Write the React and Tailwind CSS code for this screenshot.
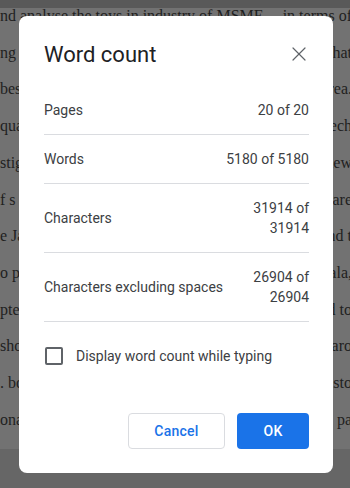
import React from 'react';
import { X } from 'lucide-react';

const lines = [
  ['nd analyse the toys in industry of MSME', 'in terms of'],
  ['ng the firms and explore', 'what'],
  ['best practices in the sector and', 'area.'],
  ['quality of the products and the', 'tech'],
  ['stigate the problems from the', 'view'],
  ['f  s', 'are'],
  ['e Jaipur district was selected', 'and t'],
  ['o present the data of India', 'ala,'],
  ['ptec with the help of the', 'd  to'],
  ['shown in the tables and', 'aro'],
  ['.  both at the level of', 'isto'],
  ['onal policy and the data', '’ pa'],
];

const rows = [
  { label: 'Pages', value: '20 of 20' },
  { label: 'Words', value: '5180 of 5180' },
  { label: 'Characters', value: '31914 of 31914' },
  { label: 'Characters excluding spaces', value: '26904 of 26904' },
];

export default function App() {
  return (
    <div className="relative w-[350px] h-[488px] overflow-hidden flex flex-col bg-[#666666]">
      {/* dimmed document behind the dialog */}
      <div className="h-[8px] bg-[#595959]"></div>
      <div className="h-[441px] bg-[#727272] overflow-hidden">
        <div className="-mt-[10px] font-['Liberation_Serif',serif] text-[16px] leading-[36.7px] text-[#1f1f1f]">
          {lines.map(([l, r], i) => (
            <div key={i} className="flex justify-between gap-2 whitespace-nowrap -mr-[2px]">
              <span>{l}</span>
              <span>{r}</span>
            </div>
          ))}
        </div>
      </div>

      {/* Word count dialog */}
      <div className="absolute left-[19px] top-[16px] w-[314px] h-[457px] bg-white rounded-[8px] pl-[25px] pr-[24px] pt-[25px] pb-[24px] flex flex-col font-['Roboto',sans-serif]">
        <div className="flex items-center justify-between h-[28px]">
          <h2 className="text-[22px] leading-[28px] text-[#202124] font-normal">Word count</h2>
          <button className="text-[#5f6368] -mr-[2px] -mt-[2px]">
            <X size={24} strokeWidth={1.2} />
          </button>
        </div>

        <div className="mt-[17px] flex flex-col">
          {rows.map((r, i) => (
            <div key={i} className="flex items-center justify-between py-[14px] border-b border-[#dadce0] text-[14px] leading-[20px] text-[#3c4043]">
              <span>{r.label}</span>
              <span className="w-[86px] text-right">{r.value}</span>
            </div>
          ))}
        </div>

        <label className="mt-[24px] flex items-center gap-[13px] text-[14px] leading-[20px] text-[#3c4043]">
          <span className="w-[18px] h-[18px] border-2 border-[#5f6368] rounded-[2px] ml-[1px]"></span>
          Display word count while typing
        </label>

        <div className="mt-auto flex justify-end gap-[12px]">
          <button className="w-[97px] h-[36px] border border-[#dadce0] rounded-[4px] text-[14px] font-medium text-[#1a73e8] tracking-[0.25px]">
            Cancel
          </button>
          <button className="w-[72px] h-[36px] rounded-[4px] bg-[#1a73e8] text-[14px] font-medium text-white tracking-[0.25px]">
            OK
          </button>
        </div>
      </div>
    </div>
  );
}
